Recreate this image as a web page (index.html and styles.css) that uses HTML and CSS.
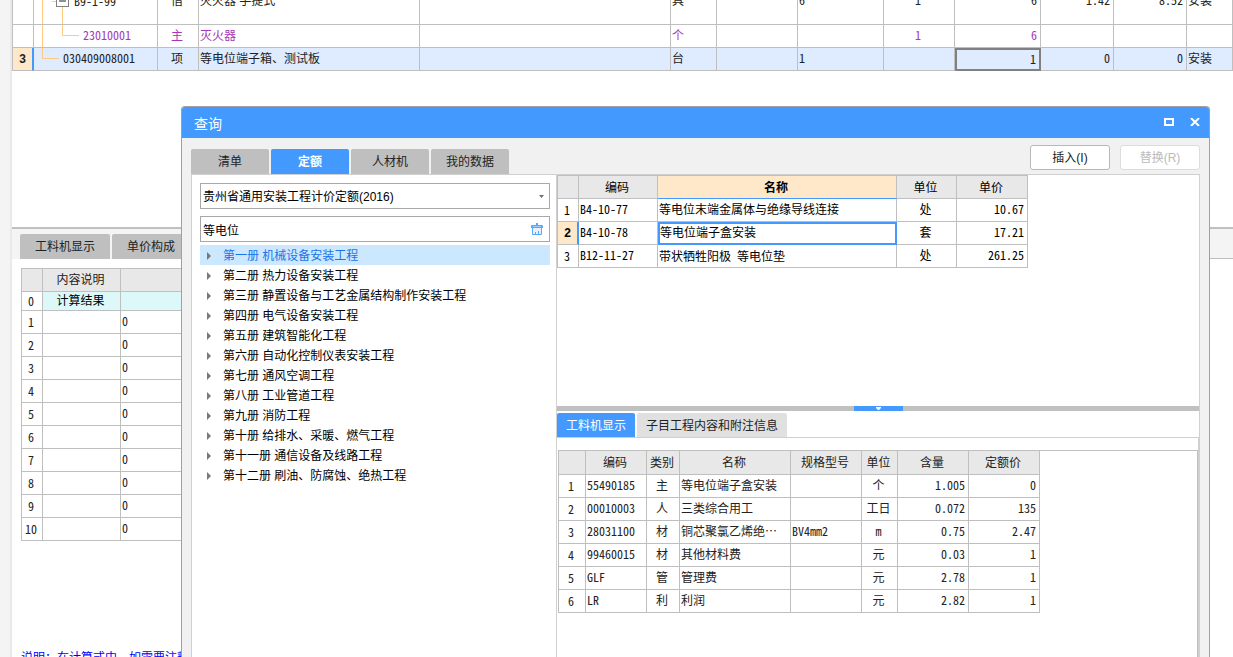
FILE: index.html
```html
<!DOCTYPE html>
<html lang="zh-CN">
<head>
<meta charset="utf-8">
<title>查询</title>
<link rel="stylesheet" href="styles.css">
</head>
<body>
<div class="app">
  <div class="gutter"></div>
  <main class="workspace">
    <div class="bill-scroll">
      <table class="grid bill">
        <colgroup><col class="w21"><col class="w124"><col class="w41"><col class="w221"><col class="w251"><col class="w46"><col class="w81"><col class="w86"><col class="w71"><col class="w86"><col class="w73"><col class="w73"><col></colgroup>
        <tbody>
          <tr class="tall">
            <td></td>
            <td class="tree-cell"><div class="branch"><svg width="40" height="45" viewBox="0 0 40 45"><path d="M8.500 0V45M18 22.500H23M28.500 28V45" stroke="#ffc980" fill="none"/><rect x="22.500" y="15.500" width="12" height="12" fill="#fff" stroke="#808080"/><path d="M25 22H32" stroke="#222"/></svg><span class="num">B9-1-99</span></div></td>
            <td class="c">借</td><td>灭火器 手提式</td><td></td><td>具</td><td></td><td class="num">6</td><td class="num c">1</td><td class="num r">6</td><td class="num r">1.42</td><td class="num r">8.52</td><td>安装</td>
          </tr>
          <tr class="purple">
            <td></td>
            <td class="tree-cell"><div class="branch"><svg width="49" height="22" viewBox="0 0 49 22"><path d="M8.500 0V22M28.500 0V10.500H45" stroke="#ffc980" fill="none"/></svg><span class="num">23010001</span></div></td>
            <td class="c">主</td><td>灭火器</td><td></td><td>个</td><td></td><td></td><td class="num c">1</td><td class="num r">6</td><td></td><td></td><td></td>
          </tr>
          <tr class="current">
            <th class="marker" scope="row">3</th>
            <td class="tree-cell"><div class="branch"><svg width="29" height="22" viewBox="0 0 29 22"><path d="M8.500 0V10.500H25" stroke="#ffc980" fill="none"/></svg><span class="num">030409008001</span></div></td>
            <td class="c">项</td><td>等电位端子箱、测试板</td><td></td><td>台</td><td></td><td class="num">1</td><td></td><td class="num r focus">1</td><td class="num r">0</td><td class="num r">0</td><td>安装</td>
          </tr>
        </tbody>
      </table>
    </div>
    <div class="lower">
      <section class="detail">
        <div class="detail-tabs"><button class="tab wide" type="button">工料机显示</button><button class="tab" type="button">单价构成</button></div>
        <div class="detail-body">
          <table class="grid calc">
            <colgroup><col class="w21"><col class="w78"><col></colgroup>
            <thead><tr><th></th><th>内容说明</th><th></th></tr></thead>
            <tbody>
              <tr class="result"><td class="num c">0</td><td class="c">计算结果</td><td></td></tr>
              <tr><td class="num c">1</td><td></td><td class="num">0</td></tr>
              <tr><td class="num c">2</td><td></td><td class="num">0</td></tr>
              <tr><td class="num c">3</td><td></td><td class="num">0</td></tr>
              <tr><td class="num c">4</td><td></td><td class="num">0</td></tr>
              <tr><td class="num c">5</td><td></td><td class="num">0</td></tr>
              <tr><td class="num c">6</td><td></td><td class="num">0</td></tr>
              <tr><td class="num c">7</td><td></td><td class="num">0</td></tr>
              <tr><td class="num c">8</td><td></td><td class="num">0</td></tr>
              <tr><td class="num c">9</td><td></td><td class="num">0</td></tr>
              <tr><td class="num c">10</td><td></td><td class="num">0</td></tr>
            </tbody>
          </table>
          <p class="note">说明：在计算式中，如需要注释</p>
        </div>
      </section>
      <aside class="side"><div class="side-strip"></div></aside>
    </div>
  </main>
</div>

<div class="dialog" role="dialog" aria-labelledby="dialog-title">
  <header class="titlebar">
    <h1 id="dialog-title">查询</h1>
    <button class="win-btn" type="button" aria-label="最大化"><svg width="10" height="8" viewBox="0 0 10 8"><rect x="1" y="1" width="8" height="6" fill="none" stroke="#fff" stroke-width="2"/></svg></button>
    <button class="win-btn" type="button" aria-label="关闭"><svg width="10" height="8" viewBox="0 0 10 8"><path d="M1 0L9 8M9 0L1 8" stroke="#fff" stroke-width="2"/></svg></button>
  </header>
  <div class="dialog-body">
    <div class="toolbar">
      <nav class="main-tabs">
        <button class="tab" type="button">清单</button><button class="tab active" type="button">定额</button><button class="tab" type="button">人材机</button><button class="tab" type="button">我的数据</button>
      </nav>
      <div class="actions"><button class="btn" type="button">插入(I)</button><button class="btn" type="button" disabled>替换(R)</button></div>
    </div>
    <div class="panes">
      <section class="nav-pane">
        <div class="field">
          <select aria-label="定额库"><option>贵州省通用安装工程计价定额(2016)</option></select>
          <svg class="caret" width="5" height="3" viewBox="0 0 5 3"><path d="M0 0H5L2.500 3Z" fill="#707070"/></svg>
        </div>
        <div class="field">
          <input type="text" value="等电位" aria-label="搜索">
          <button class="clear" type="button" aria-label="清除"><svg width="12" height="12" viewBox="0 0 12 12"><path d="M5 0h2v2h4q1 0 1 1v2H0V3q0-1 1-1h4z" fill="#5aa6f8"/><path d="M2 3.500h8" stroke="#9dcbfb"/><path d="M1.500 5v6.500h9V5" fill="#e4f1ff" stroke="#5aa6f8"/><path d="M4.500 11V9M7.500 11V8" fill="none" stroke="#5aa6f8"/></svg></button>
        </div>
        <ul class="tree">
          <li><button class="node on" type="button">第一册 机械设备安装工程</button></li>
          <li><button class="node" type="button">第二册 热力设备安装工程</button></li>
          <li><button class="node" type="button">第三册 静置设备与工艺金属结构制作安装工程</button></li>
          <li><button class="node" type="button">第四册 电气设备安装工程</button></li>
          <li><button class="node" type="button">第五册 建筑智能化工程</button></li>
          <li><button class="node" type="button">第六册 自动化控制仪表安装工程</button></li>
          <li><button class="node" type="button">第七册 通风空调工程</button></li>
          <li><button class="node" type="button">第八册 工业管道工程</button></li>
          <li><button class="node" type="button">第九册 消防工程</button></li>
          <li><button class="node" type="button">第十册 给排水、采暖、燃气工程</button></li>
          <li><button class="node" type="button">第十一册 通信设备及线路工程</button></li>
          <li><button class="node" type="button">第十二册 刷油、防腐蚀、绝热工程</button></li>
        </ul>
      </section>
      <section class="result-pane">
        <div class="results">
          <table class="grid quota">
            <colgroup><col class="w21"><col class="w79"><col class="w239"><col class="w60"><col class="w71"></colgroup>
            <thead><tr><th></th><th>编码</th><th class="sorted">名称</th><th>单位</th><th>单价</th></tr></thead>
            <tbody>
              <tr><td class="num c">1</td><td class="num">B4-10-77</td><td>等电位末端金属体与绝缘导线连接</td><td class="c">处</td><td class="num r">10.67</td></tr>
              <tr><th class="marker" scope="row">2</th><td class="num">B4-10-78</td><td class="picked">等电位端子盒安装</td><td class="c">套</td><td class="num r">17.21</td></tr>
              <tr><td class="num c">3</td><td class="num">B12-11-27</td><td class="mixed">带状牺牲阳极 等电位垫</td><td class="c">处</td><td class="num r">261.25</td></tr>
            </tbody>
          </table>
        </div>
        <div class="splitter"><button class="grip" type="button" aria-label="折叠"><svg width="5" height="3" viewBox="0 0 5 3"><path d="M0 0H5V1L3 3H2L0 1Z" fill="#fff"/></svg></button></div>
        <div class="sub-tabs"><button class="tab active" type="button">工料机显示</button><button class="tab pale" type="button">子目工程内容和附注信息</button></div>
        <div class="sub-body">
          <div class="sub-frame">
            <table class="grid parts">
              <colgroup><col class="w27"><col class="w61"><col class="w33"><col class="w111"><col class="w71"><col class="w36"><col class="w71"><col class="w71"></colgroup>
              <thead><tr><th></th><th>编码</th><th>类别</th><th>名称</th><th>规格型号</th><th>单位</th><th>含量</th><th>定额价</th></tr></thead>
              <tbody>
                <tr><td class="num c">1</td><td class="num">55490185</td><td class="c">主</td><td>等电位端子盒安装</td><td></td><td class="c">个</td><td class="num r">1.005</td><td class="num r">0</td></tr>
                <tr><td class="num c">2</td><td class="num">00010003</td><td class="c">人</td><td>三类综合用工</td><td></td><td class="c">工日</td><td class="num r">0.072</td><td class="num r">135</td></tr>
                <tr><td class="num c">3</td><td class="num">28031100</td><td class="c">材</td><td>铜芯聚氯乙烯绝⋯</td><td class="num">BV4mm2</td><td class="num c">m</td><td class="num r">0.75</td><td class="num r">2.47</td></tr>
                <tr><td class="num c">4</td><td class="num">99460015</td><td class="c">材</td><td>其他材料费</td><td></td><td class="c">元</td><td class="num r">0.03</td><td class="num r">1</td></tr>
                <tr><td class="num c">5</td><td class="num">GLF</td><td class="c">管</td><td>管理费</td><td></td><td class="c">元</td><td class="num r">2.78</td><td class="num r">1</td></tr>
                <tr><td class="num c">6</td><td class="num">LR</td><td class="c">利</td><td>利润</td><td></td><td class="c">元</td><td class="num r">2.82</td><td class="num r">1</td></tr>
              </tbody>
            </table>
          </div>
        </div>
      </section>
    </div>
  </div>
</div>
</body>
</html>
```

FILE: styles.css
```css
* { box-sizing: border-box; }

body {
  margin: 0;
  height: 100vh;
  overflow: hidden;
  position: relative;
  background: #fff;
  color: #222;
  font: 12px/16px "Liberation Sans", "Noto Sans CJK SC", sans-serif;
}

button, input, select { font: inherit; color: inherit; margin: 0; }
button { border: 0; padding: 0; background: none; white-space: nowrap; }
svg { display: block; flex: none; }

.app { display: flex; height: 100%; }
.gutter { width: 12px; flex: none; background: #f4f4f4; border-right: 2px solid #e9e9e9; }
.workspace { flex: 1; min-width: 0; display: flex; flex-direction: column; }

/* Grids */
.grid { border-collapse: separate; border-spacing: 0; table-layout: fixed; border-left: 1px solid #bfbfbf; }
.grid th, .grid td {
  height: 23px;
  padding: 0 3px 0 1px;
  border-right: 1px solid #bfbfbf;
  border-bottom: 1px solid #bfbfbf;
  text-align: left;
  font-weight: 400;
  white-space: nowrap;
  overflow: hidden;
}
.grid thead th { background: #e8e8e8; text-align: center; border-top: 1px solid #bfbfbf; height: 24px; }
.num, .mixed { font-family: "Noto Sans Mono CJK SC", "Liberation Mono", monospace; }
.grid .num:not(:first-child) { padding-bottom: 2px; }
.grid .c { text-align: center; }
.grid .r { text-align: right; }
.grid .marker { background: #ffe7ca; font-weight: 700; text-align: center; padding: 0; border-right: 2px solid #4499ff; }

.w21 { width: 21px; } .w27 { width: 27px; } .w33 { width: 33px; } .w36 { width: 36px; }
.w41 { width: 41px; } .w46 { width: 46px; } .w60 { width: 60px; } .w61 { width: 61px; }
.w71 { width: 71px; } .w73 { width: 73px; } .w78 { width: 78px; } .w79 { width: 79px; }
.w81 { width: 81px; } .w86 { width: 86px; } .w111 { width: 111px; } .w124 { width: 124px; }
.w221 { width: 221px; } .w239 { width: 239px; } .w251 { width: 251px; }

.bill-scroll { height: 71px; flex: none; display: flex; flex-direction: column; justify-content: flex-end; overflow: hidden; }
.bill { width: 100%; }
.bill .tall td { height: 46px; padding-bottom: 2px; }
.bill .tall .num { padding-bottom: 4px; }
.bill .tree-cell, .bill .tall .tree-cell { padding: 0; }
.branch { display: flex; align-items: center; }
.grid .branch .num { padding-bottom: 2px; }
.purple { color: #a239b8; }
.current td { background: #dfebff; }
.grid .focus { border: 2px solid #808080; }

/* Lower area */
.lower { flex: 1; min-height: 0; margin-top: 156px; border-top: 2px solid #c0c0c0; display: flex; }
.detail { flex: 1; min-width: 0; overflow: hidden; }
.detail-tabs { height: 30px; padding: 5px 8px 0; background: #f4f4f4; display: flex; gap: 2px; }
.tab { width: 78px; height: 25px; background: #bfbfbf; border-radius: 2px 2px 0 0; }
.tab.wide { width: 90px; }
.detail-body { padding: 9px 0 0 9px; }
.calc { width: 100%; }
.calc .result td { height: 19px; line-height: 12px; }
.calc .result td + td { background: #dcf8f8; color: #000; border-right-color: #dcf8f8; }
.calc .result td:nth-child(2) { border-right-color: #bfbfbf; }
.note { margin: 109px 0 0; color: #00f; white-space: nowrap; }
.side { width: 24px; }
.side-strip { height: 30px; background: #f4f4f4; border-bottom: 1px solid #bfbfbf; }

/* Dialog window */
.dialog {
  position: absolute;
  inset: 106px 23px 0 181px;
  display: flex;
  flex-direction: column;
  border: 1px solid #a0a0a0;
  border-bottom: 0;
  border-radius: 4px 4px 0 0;
  background: #f1f1f1;
  overflow: hidden;
}
.titlebar { height: 31px; flex: none; padding: 0 1px 0 12px; background: #4499ff; color: #fff; display: flex; align-items: center; }
.titlebar h1 { flex: 1; margin: 0; padding-top: 2px; font-size: 14px; line-height: 20px; font-weight: 400; }
.win-btn { width: 26px; height: 28px; padding-bottom: 2px; display: grid; place-items: center; }
.dialog-body { flex: 1; min-height: 0; padding: 7px 9px 0; display: flex; flex-direction: column; }
.toolbar { height: 29px; flex: none; display: flex; justify-content: space-between; }
.main-tabs { display: flex; gap: 2px; align-items: flex-end; }
.tab.active { background: #4499ff; color: #fff; }
.main-tabs .active { font-weight: 700; }
.actions { display: flex; gap: 10px; }
.btn { width: 80px; height: 25px; border: 1px solid #b8b8b8; border-radius: 3px; background: #fff; color: #222; }
.btn:disabled { border-color: #dcdcdc; color: #bbb; }

.panes { flex: 1; min-height: 0; display: flex; background: #fff; border: 1px solid #d0d0d0; border-bottom: 0; }
.nav-pane { width: 365px; flex: none; padding: 8px 6px 0 8px; border-right: 1px solid #d0d0d0; color: #000; }
.field { position: relative; margin-bottom: 7px; }
.field select, .field input {
  display: block;
  width: 100%;
  height: 26px;
  padding: 1px 24px 0 2px;
  border: 1px solid #a8a8a8;
  border-radius: 0;
  background: #fff;
  color: #000;
  appearance: none;
  outline: 0;
}
.caret { position: absolute; right: 6px; top: 12px; }
.clear { position: absolute; right: 7px; top: 7px; }
.tree { list-style: none; margin: 0; padding: 0; }
.field + .field { margin-bottom: 3px; }
.node { width: 100%; height: 20px; padding: 2px 0 0 7px; display: flex; align-items: center; gap: 12px; text-align: left; }
.node::before { content: ""; border-left: 4px solid #777; border-top: 4px solid transparent; border-bottom: 4px solid transparent; }
.node.on { background: #cce8ff; color: #1a73e8; }

.result-pane { flex: 1; min-width: 0; display: flex; flex-direction: column; }
.results { height: 231px; flex: none; color: #000; }
.quota thead th { padding-top: 2px; }
.grid .sorted { background: #ffe7ca; font-weight: 700; border-bottom-color: #4499ff; }
.grid .picked { border: 2px solid #4499ff; padding: 0 0 2px; }
.quota, .parts { width: 0; }
.splitter { height: 5px; flex: none; background: #c0c0c0; display: flex; justify-content: center; }
.grip { width: 49px; height: 5px; background: #4499ff; display: grid; place-items: center; }
.sub-tabs { height: 27px; flex: none; padding-top: 2px; border-bottom: 1px solid #d0d0d0; display: flex; gap: 2px; }
.sub-tabs .tab { height: 24px; padding-top: 1px; }
.tab.pale { width: 150px; background: #e0e0e0; }
.sub-body { flex: 1; min-height: 0; display: flex; padding: 12px 0 0 1px; border-right: 1px solid #d0d0d0; }
.sub-frame { flex: 1; border-top: 1px solid #bfbfbf; border-right: 1px solid #bfbfbf; }
.grid.parts thead th { border-top: 0; }
```
